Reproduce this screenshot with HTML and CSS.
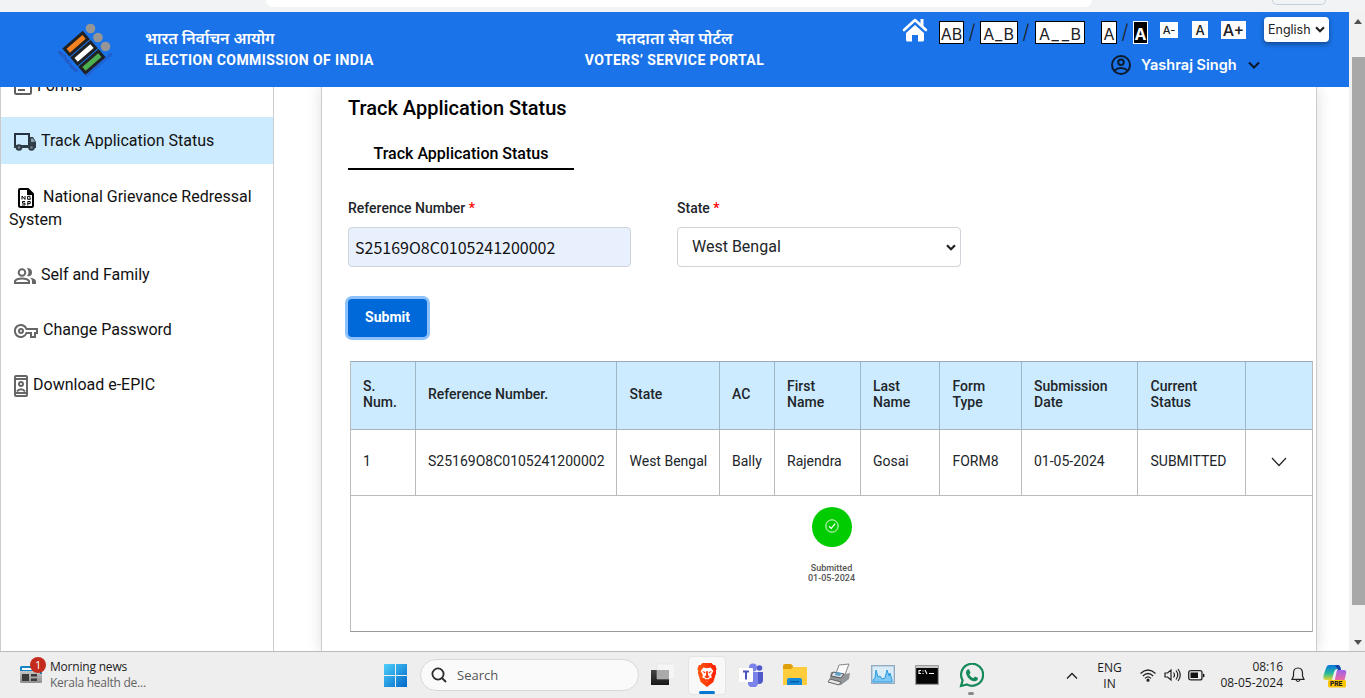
FILE: index.html
```html
<!DOCTYPE html>
<html lang="en">
<head>
<meta charset="utf-8">
<title>Track Application Status</title>
<link rel="stylesheet" href="styles.css">
</head>
<body>
<div class="chrome"><div class="address"></div><div class="pill"></div></div>
<div class="view">
  <div class="page">
    <header class="header">
      <svg class="logo" width="60" height="56" viewBox="0 0 60 56">
        <g transform="rotate(-41 30 28)">
          <g fill="#f58220" stroke="#202124" stroke-width="3"><rect x="14.500" y="11.500" width="24" height="8"/><rect x="14.500" y="23.500" width="24" height="8" fill="#fff"/><rect x="14.500" y="35.500" width="24" height="8" fill="#4caf50"/></g>
        </g>
        <g fill="#969696"><circle cx="33.500" cy="5.500" r="4.800"/><circle cx="41" cy="14.500" r="4.800"/><circle cx="48.500" cy="23.500" r="4.800"/></g>
        <g class="logo-text"><text transform="translate(0 28) rotate(50)" textLength="29">भारत निर्वाचन आयोग</text><text transform="translate(30 54) rotate(-41)" textLength="34" lengthAdjust="spacingAndGlyphs">Election Commission of India</text></g>
      </svg>
      <div class="brand"><div class="hindi h1">भारत निर्वाचन आयोग</div><div class="eng e1">ELECTION COMMISSION OF INDIA</div></div>
      <div class="brand portal"><div class="hindi h2">मतदाता सेवा पोर्टल</div><div class="eng e2">VOTERS’ SERVICE PORTAL</div></div>
      <div class="tools">
        <div class="toolrow">
          <svg class="home" width="26" height="24" viewBox="0 0 26 24"><path d="M2 12 13 2l11 10" fill="none" stroke="#fff" stroke-width="2.600" stroke-linecap="round" stroke-linejoin="round"/><path d="M18.500 1h3v7h-3zM13 7l9 8v7a1.500 1.500 0 0 1-1.500 1.500H16V17h-6v6.500H5.500A1.500 1.500 0 0 1 4 22v-7z" fill="#fff"/></svg>
          <span class="box b1">AB</span><span class="slash">/</span><span class="box b2">A_B</span><span class="slash">/</span><span class="box b3">A<i>_</i><i>_</i>B</span>
          <span class="box b4">A</span><span class="slash s3">/</span><span class="box dark">A</span>
          <span class="size z1">A-</span><span class="size z2">A</span><span class="size z3">A+</span>
          <span class="lang"><span>English</span><svg width="10" height="7" viewBox="0 0 10 7"><path d="m1 1.300 4 4 4-4" fill="none" stroke="#202124" stroke-width="2.200"/></svg></span>
        </div>
        <div class="user">
          <svg width="22" height="22" viewBox="0 0 22 22" fill="none" stroke="#0d1b2e" stroke-width="2"><circle cx="11" cy="11" r="9"/><circle cx="11" cy="8.300" r="2.800"/><path d="M4.500 16.500c3.500-3.300 9.500-3.300 13 0"/></svg>
          <span class="name">Yashraj Singh</span>
          <svg width="12" height="8" viewBox="0 0 12 8"><path d="m1 1.500 5 5 5-5" fill="none" stroke="#0b1626" stroke-width="2"/></svg>
        </div>
      </div>
    </header>
    <div class="body">
      <nav class="sidebar">
        <div class="forms"><svg width="18" height="20" viewBox="0 0 18 20" fill="none" stroke="#5f5f5f" stroke-width="2"><rect x="1" y="1" width="16" height="18" rx="1.500"/><path d="M4 7h10M4 10h10M4 15h7"/></svg><span>Forms</span></div>
        <div class="item active"><svg width="23" height="18" viewBox="0 0 23 18"><path d="M1 1h14v13H1z" fill="none" stroke="#263442" stroke-width="2"/><path d="M15 4h4l3 5v6h-7zM0 12h22v3H0z" fill="#303c46"/><path d="M17 5.500h2l2 3.500h-4z" fill="#8ba3b2"/><g fill="#708390" stroke="#303c46" stroke-width="2"><circle cx="5" cy="14.500" r="2.300"/><circle cx="17.500" cy="14.500" r="2.300"/></g></svg><span>Track Application Status</span></div>
        <div class="item wrap"><svg width="16" height="20" viewBox="0 0 16 20"><path d="M2 1h8l5 5v11.500a1.500 1.500 0 0 1-1.500 1.500h-11A1.500 1.500 0 0 1 1 17.500V2a1 1 0 0 1 1-1z" fill="#fff" stroke="#000" stroke-width="2"/><path d="M9 0v7h6z"/><path d="M4 11.500v-3.500l3 3.500v-3.500M12.500 8.300H9.600v3h2.700v-1.500h-1M7 13.500H4.500v1.700H7V17H4M9.800 17.500v-4h2.400v2.100H9.800" fill="none" stroke="#000" stroke-width="1"/></svg><span>National Grievance Redressal</span><div>System</div></div>
        <div class="item family"><svg width="22" height="17" viewBox="0 0 22 17" fill="none" stroke="#666" stroke-width="2"><circle cx="8" cy="4.500" r="3.300"/><path d="M1 15v-2c2-3.500 12-3.500 14 0v2z"/><path d="M13 0q5 0 5 4.500T13 8q3-3.500 0-8M16 9.500q6 1 6 4V16h-4v-3q0-2-2-3.500" fill="#666" stroke="none"/></svg><span>Self and Family</span></div>
        <div class="item password"><svg width="24" height="15" viewBox="0 0 24 15" fill="none" stroke="#666" stroke-width="2"><path d="M12.500 5H23v4h-2v4h-4V9h-4.500A6 6 0 1 1 12.500 5z"/><circle cx="7" cy="7" r="2"/></svg><span>Change Password</span></div>
        <div class="item epic"><svg width="14" height="22" viewBox="0 0 14 22" fill="none" stroke="#666" stroke-width="2"><rect x="1" y="1" width="12" height="20" rx="1"/><path d="M1 4h12M1 18h12M3 16.500c2-3 6-3 8 0"/><circle cx="7" cy="9" r="2"/></svg><span>Download e-EPIC</span></div>
      </nav>
      <main class="card">
        <h1>Track Application Status</h1>
        <div class="tab">Track Application Status</div>
        <div class="fields">
          <div class="field"><label>Reference Number <b>*</b></label><div class="input ref">S25169O8C0105241200002</div></div>
          <div class="field"><label>State <b>*</b></label><div class="input select"><span>West Bengal</span><svg width="10" height="7" viewBox="0 0 10 7"><path d="m1 1.300 4 4 4-4" fill="none" stroke="#202124" stroke-width="2.200"/></svg></div></div>
        </div>
        <div class="submit">Submit</div>
        <section class="table">
          <div class="row head"><div>S.<br>Num.</div><div>Reference Number.</div><div>State</div><div>AC</div><div>First<br>Name</div><div>Last<br>Name</div><div>Form<br>Type</div><div>Submission<br>Date</div><div>Current<br>Status</div><div></div></div>
          <div class="row data"><div>1</div><div>S25169O8C0105241200002</div><div>West Bengal</div><div>Bally</div><div>Rajendra</div><div>Gosai</div><div>FORM8</div><div>01-05-2024</div><div>SUBMITTED</div><div class="chev"><svg width="16" height="10" viewBox="0 0 16 10"><path d="m1 1 7 7.500L15 1" fill="none" stroke="#212529" stroke-width="1.200"/></svg></div></div>
          <div class="detail">
            <div class="dot"><svg width="14" height="14" viewBox="0 0 14 14" fill="none" stroke="#fff"><circle cx="7" cy="7" r="6.200" stroke-width=".9"/><path d="m4 7.200 2.200 2.200 4-4.800" stroke-width="1.300"/></svg></div>
            <div class="step">Submitted<br>01-05-2024</div>
          </div>
        </section>
      </main>
    </div>
  </div>
  <div class="scroll"><svg width="8" height="5" viewBox="0 0 8 5"><path d="M4 0 8 5H0z" fill="#505050"/></svg><div class="thumb"></div><svg width="8" height="5" viewBox="0 0 8 5"><path d="M0 0h8L4 5z" fill="#505050"/></svg></div>
</div>
<footer class="taskbar">
  <div class="news"><svg width="28" height="28" viewBox="0 0 28 28"><defs><linearGradient id="ng" x2="0" y2="1"><stop stop-color="#ddd"/><stop offset="1" stop-color="#8d8d8d"/></linearGradient></defs><rect x="1" y="9" width="22" height="17" rx="1.500" fill="url(#ng)"/><path d="M1 14v-3.500A1.500 1.500 0 0 1 2.500 9H23v8h-2v-3z" fill="#1586c4"/><path d="M3 11h12v2H3z" fill="#fff"/><path d="M3 17h7v7H3zm9 0h6v2.500h-6zm0 4.500h6V24h-6z" fill="#3b3b3b"/><circle cx="19" cy="8" r="8" fill="#c42b1c"/><text x="16" y="12" class="badge">1</text></svg><div class="newstext"><div>Morning news</div><div class="grey">Kerala health de...</div></div></div>
  <svg class="win" width="23" height="23" viewBox="0 0 23 23"><defs><linearGradient id="wg" x2="1" y2="1"><stop stop-color="#4dd0fb"/><stop offset="1" stop-color="#0067c8"/></linearGradient></defs><path d="M0 0h11v11H0zm12 0h11v11H12zM0 12h11v11H0zm12 0h11v11H12z" fill="url(#wg)"/></svg>
  <div class="search"><svg width="16" height="16" viewBox="0 0 16 16" fill="none" stroke="#2b2b2b" stroke-width="1.800"><circle cx="7" cy="7" r="5.600"/><path d="m11 11 4 4"/></svg><span>Search</span></div>
  <div class="apps">
    <div class="app"><svg width="24" height="24" viewBox="0 0 24 24"><defs><linearGradient id="tv" x2="0" y2="1"><stop stop-color="#444"/><stop offset="1" stop-color="#181818"/></linearGradient></defs><path d="M0 7h18v15H0z" fill="url(#tv)"/><path d="M6 1h18v15H6z" fill="#f5f5f5" stroke="#ddd" stroke-width=".5"/><path d="M6 7h12v9H6z" fill="#aaa"/></svg></div>
    <div class="app current"><svg width="20" height="24" viewBox="0 0 22 24" preserveAspectRatio="none"><defs><linearGradient id="bg" x2="1"><stop stop-color="#ff5a10"/><stop offset="1" stop-color="#ff1c00"/></linearGradient></defs><path d="M6 0h10l2 2h2l1.500 4-.8 2 .3 2-3 9-7 5-7-5-3-9 .3-2L.5 6 2 2h2z" fill="url(#bg)"/><path d="M7 4.500l4 .8 4-.8 3 3.500-2.500 4 .8 2.500-3 1-2.300 3.500-2.300-3.500-3-1 .8-2.500L4 8z" fill="#fff"/><path d="m5.500 8 4 1-1 1.500zm11 0-4 1 1 1.500zM10.200 8h1.600l.5 4.500L14 14l-3 1.500L8 14l1.700-1.500zM8 17l3-1 3 1-3 1.500z" fill="#ff3b0a"/></svg></div>
    <div class="app"><svg width="24" height="24" viewBox="0 0 24 24"><circle cx="20.500" cy="5" r="2.800" fill="#5059c9"/><path d="M17 9h7v8q0 4-4 4h-3z" fill="#5059c9"/><circle cx="14" cy="4.500" r="4" fill="#7b83eb"/><path d="M9 9h10v9a5 5 0 0 1-10 3z" fill="#7b83eb"/><rect y="5" width="14" height="14" rx="1" fill="#fff"/><path d="M4 8.500h6M7 8.500v8" stroke="#4b53bc" stroke-width="2"/></svg></div>
    <div class="app"><svg width="24" height="24" viewBox="0 0 24 24"><path d="M0 3q0-2 2-2h6l2 2v4H0z" fill="#dda00a"/><path d="M0 6h8l2-2h14v18H0z" fill="#ffcd3c"/><path d="M4 22v-5q0-2 2-2h11q2 0 2 2v5z" fill="#1689d8"/><path d="M7 18h9v1.500H7z" fill="#075ea8"/></svg></div>
    <div class="app"><svg width="24" height="24" viewBox="0 0 24 24"><path d="m12 2 10-1-5 13-9-1z" fill="#fafafa" stroke="#888"/><path d="m4 9 14 2 5-1-1 6-8 6-12-3 1-5z" fill="#929699"/><path d="m6 9 11 2-3 4-10-2z" fill="#d6e2ea" stroke="#555"/><path d="m3 16 11 3-2 3-11-3z" fill="#e5e5e5" stroke="#666"/><path d="m9 9 6 1-2 3-5-1z" fill="#5e9fc8"/></svg></div>
    <div class="app"><svg width="24" height="20" viewBox="0 0 24 20"><rect x=".7" y=".7" width="22.600" height="17.600" fill="#d9edf9" stroke="#94abc0" stroke-width="1.400"/><path d="M2 15l2-2 1-8 2 7 2-1 2 3 3-1 2-8 2 6 1-3 2 7v2H2z" fill="#7fc8f5" stroke="#2e9bde"/></svg></div>
    <div class="app"><svg width="24" height="20" viewBox="0 0 24 20"><rect x=".7" y=".7" width="22.600" height="18.600" fill="#050505" stroke="#999"/><path d="M1 1h22v2H1z" fill="#c8c8c8"/><path d="M6 5.500H4v3h2M8 5.500v1M8 8v1M10 5l2 4M14 8.500h5" fill="none" stroke="#fff" stroke-width="1.100"/></svg></div>
    <div class="app whatsapp"><svg width="25" height="25" viewBox="0 0 25 25"><path d="M2 23l1.600-5.700A11 11 0 1 1 8 21.500z" fill="none" stroke="#15895a" stroke-width="2.200"/><path d="M8.500 6.500 10 6.300l1.500 3.500-1.200 1.700q1.500 2.800 4 3.700l1.700-1.700 3 1.500q0 3-3.500 3.300C10.500 18 7 12.500 7 9.500q0-2 1.500-3z" fill="#15895a"/></svg></div>
  </div>
  <div class="tray">
    <svg class="up" width="12" height="8" viewBox="0 0 12 8"><path d="m1 6.500 5-5 5 5" fill="none" stroke="#222" stroke-width="1.400"/></svg>
    <div class="ime">ENG<br>IN</div>
    <svg class="wifi" width="16" height="13" viewBox="0 0 16 13" fill="none" stroke="#222" stroke-width="1.200"><path d="M.5 4.500q7.500-7 15 0M2.800 7q5.200-5 10.400 0M5 9.300q3-3 6 0"/><circle cx="8" cy="11.200" r="1" fill="#222"/></svg>
    <svg class="sound" width="17" height="14" viewBox="0 0 17 14" fill="none" stroke="#222" stroke-width="1.200"><path d="M1 5h2.500L7 2v10L3.500 9H1zM9.500 4.500q2 2.500 0 5M12 2.500q3.500 4.500 0 9M14 1q4.500 6 0 12"/></svg>
    <svg class="battery" width="17" height="11" viewBox="0 0 17 11"><rect x=".7" y=".7" width="13.300" height="9.200" rx="2" fill="none" stroke="#222" stroke-width="1.300"/><path d="M2.500 2.500H10v5.600H2.500zM15 3.500l1.500 1v2l-1.500 1z" fill="#111"/></svg>
    <div class="clock">08:16<br>08-05-2024</div>
    <svg class="bell" width="14" height="16" viewBox="0 0 14 16" fill="none" stroke="#222" stroke-width="1.200"><path d="M7 1C4 1 2.500 3.200 2.500 6v3L1 12.300h12L11.500 9V6C11.500 3.200 10 1 7 1zM5 13q2 3 4 0"/></svg>
    <svg class="copilot" width="24" height="24" viewBox="0 0 24 24"><defs><linearGradient id="cg" x2="0" y2="1"><stop stop-color="#0874df"/><stop offset=".55" stop-color="#26b99c"/><stop offset="1" stop-color="#e4d62f"/></linearGradient><linearGradient id="cp" x2="0" y2="1"><stop stop-color="#9c62ec"/><stop offset="1" stop-color="#ff6b91"/></linearGradient></defs><path d="M6 1h9q2 0 3 4h-4q-2 0-3 3l-2 8H3q-4 0-2-6l2-6q1-3 3-3z" fill="url(#cg)"/><path d="M14 6h7q3 0 2 4l-2 8H10q2 0 2-3z" fill="url(#cp)"/><path d="M12 1h3q2 0 3 5h-3z" fill="#1645aa"/><rect x="5" y="16" width="18" height="7.500" rx="1.500" fill="#ffc400"/><text x="7" y="22.300" class="pre">PRE</text></svg>
  </div>
</footer>
</body>
</html>
```
FILE: styles.css
```css
*{box-sizing:border-box}
body{margin:0;width:1365px;height:698px;overflow:hidden;display:flex;flex-direction:column;background:#fff;font-family:Roboto,"Noto Sans",sans-serif;color:#212529}
svg{display:block;flex:none}
.chrome{height:12px;flex:none;background:#f1f3f5;display:flex;align-items:flex-start}
.address{margin-left:266px;width:826px;height:7px;background:#fff;border-radius:0 0 8px 8px}
.pill{margin-left:180px;width:54px;height:5px;border:1px solid #c4d1dc;border-top:0;border-radius:0 0 9px 9px}
.view{height:639px;flex:none;display:flex}
.page{width:1349px;display:flex;flex-direction:column;overflow:hidden}
.header{height:75px;flex:none;background:#1a73e8;display:flex;color:#fff;white-space:nowrap}
.logo{margin:11px 0 0 57px;overflow:visible}
.logo-text{font:700 4.500px Roboto,sans-serif;fill:#2850bd}
.brand{margin:15px 0 0 28px;width:230px}
.portal{margin-left:160px;width:279px;text-align:center}
.hindi{height:22px;line-height:24px;font-size:16.300px;font-weight:600}
.h1{font-size:15.900px}
.eng{height:22px;line-height:22px;font-size:14px;font-weight:700;letter-spacing:.41px}
.tools{margin-left:88px;width:447px}
.toolrow{height:38px;display:flex;align-items:flex-start;color:#202124;font-family:Inter,sans-serif}
.home{margin-top:6px}
.box{height:23px;margin-top:9px;border:1px solid #000;background:#fff;font-size:16px;line-height:24px;text-align:center}
.box i{font-style:normal;margin:0 1.500px}
.b1{width:25px;margin-left:11px}
.slash{width:16px;margin-top:7px;text-align:center;font-size:20px;line-height:26px;font-weight:300}
.b2{width:38px;letter-spacing:.8px}.b3{width:50px;margin-left:1px}.b4{width:16px;margin-left:16px}
.s3{width:16px}.dark{width:15px;background:#000;color:#fff;border-color:#fff;font-weight:700}
.size{background:#fff;text-align:center;font-weight:500}
.z1{width:18px;height:16px;margin:10px 0 0 12px;font-size:11px;line-height:17px}
.z2{width:16px;height:17px;margin:9px 0 0 14px;font-size:13px;line-height:18px}
.z3{width:25px;height:18px;margin:9px 0 0 13px;font-size:16px;line-height:19px}
.lang{width:65px;height:25px;margin:5px 0 0 18px;padding:0 4px;display:flex;align-items:center;justify-content:space-between;background:#fff;border-radius:4px;box-shadow:0 2px 5px #0006;font-size:12.500px}
.user{display:flex;align-items:center;height:30px;padding-left:208px}
.name{margin:-2px 10px 0 9px;width:97px;font:600 14.500px Inter,sans-serif}
.body{height:564px;display:flex;overflow:hidden}
.sidebar{width:274px;border:solid #ccc;border-width:0 1px;font-size:16px;line-height:23px;color:#111;white-space:nowrap}
.forms{height:30px;padding-left:13px;display:flex;gap:5px}
.forms svg{margin-top:-12px}.forms span{margin-top:-13px}
.item{height:55px;display:flex;gap:5px;padding-left:13px}
.item.active{height:47px;background:#ccebff;padding-top:12px;gap:4px}
.active svg{margin-top:4px}
.item.wrap{height:99px;padding:21px 0 0 8px;flex-wrap:wrap;align-content:flex-start;gap:0}
.wrap svg{margin:3px 9px 0}.wrap div{width:200px}
.family svg{margin-top:5px}
.password svg{margin-top:6px}
.epic svg{margin-top:2px}
.card{margin-left:47px;width:996px;border:solid #ccc;border-width:0 1px;box-shadow:0 0 14px #0002;padding:8px 0 0 26px;white-space:nowrap}
h1{margin:0;height:26px;font-size:20px;font-weight:500;line-height:26px;color:#000}
.tab{width:226px;height:36px;margin-top:13px;padding-top:8px;border-bottom:2px solid #000;font-size:16px;font-weight:500;line-height:24px;text-align:center;color:#000}
.fields{display:flex;gap:46px;margin-top:28px}
.field{width:283px}
.field+.field{width:284px}
label{display:block;height:29px;line-height:20px;font-size:14px;font-weight:500}
label b{color:red;font-weight:500}
.input{height:40px;border:1px solid #ced4da;border-radius:4px;font-size:16px;line-height:38px}
.ref{background:#e8f0fe;color:#111;padding:0 0 0 6px;font-family:"Noto Sans CJK SC",sans-serif}
.select{display:flex;align-items:center;justify-content:space-between;padding:0 4px 0 14px}
.submit{width:79px;height:38px;margin-top:32px;background:#0069d9;border-radius:4px;box-shadow:0 0 0 3px #8dc1fc;color:#fff;font-size:14px;font-weight:700;line-height:37px;text-align:center}
.table{margin:24px 0 0 2px;width:963px;border:1px solid #999;border-color:#9bacb7 #bbb #999;font-size:14px}
.row{display:grid;grid-template-columns:64px 201px 103px 55px 86px 79px 82px 116px 108px 67px}
.row>div{display:flex;align-items:center;padding-left:12px;border-left:1px solid #bbb}
.row>div:first-child{border-left:0}
.row>div:nth-child(3),.row>div:nth-child(7),.row>div:nth-child(9){padding-left:12.500px}
.head{height:68px;background:#ccebff;font-weight:500;line-height:16px;border-bottom:1px solid #a4b5bf}
.head>div{border-left-color:#9fb6c4}
.head>div{padding-bottom:4px;background:#ccebff}
.data{height:66px;border-bottom:1px solid #bbb}
.data>div{padding-bottom:3px}
.data .chev{padding:0 0 2px 25px}
.detail{height:135px;display:flex;flex-direction:column;align-items:center;padding-top:11px}
.dot{width:40px;height:40px;border-radius:50%;background:#0c0;display:flex;align-items:center;justify-content:center;padding-bottom:2px}
.step{margin-top:16px;font-size:9px;line-height:10px;text-align:center;color:#555;font-weight:500}
.scroll{width:16px;background:#f1f1f1;display:flex;flex-direction:column;align-items:center;padding:7px 0 6px 2px}
.thumb{width:13px;height:548px;margin:33px 0 35px 1px;background:#a8a8a8}
.scroll svg:last-child{margin-top:auto}
.taskbar{height:47px;flex:none;border-top:1px solid #b9bcbc;background:#eee;display:flex;font:12px/16px "Open Sans",sans-serif;color:#1b1b1b;white-space:nowrap}
.news{width:383px;padding:5px 0 0 19px;display:flex;gap:3px}
.newstext{padding-top:2px;letter-spacing:-.2px}.grey{color:#626262;letter-spacing:-.25px}
.badge{font:11px "Open Sans",sans-serif;fill:#fff}
.win{margin:12px 13px 0 1px}
.search{width:219px;height:32px;margin-top:7px;background:#fafafa;border:1px solid #d8d8d8;border-radius:16px;display:flex;align-items:center;gap:10px;padding-left:10px;font-size:13px;color:#555}
.apps{display:flex;margin:4px 0 0 5px}
.app{width:38px;height:39px;margin-right:6px;position:relative;display:flex;align-items:center;justify-content:center;padding-bottom:1px}
.app.current{background:#f8f8f8;border:1px solid #e4e4e4;border-radius:4px}
.current:after,.whatsapp:after{content:"";position:absolute;left:10px;bottom:0;width:16px;height:3px;border-radius:2px;background:#0078d4}
.whatsapp:after{left:16px;width:6px;background:#888}
.tray{display:flex;margin-left:auto;width:300px;height:46px}
.up{margin:20px 0 0 1px}
.ime{width:35px;margin:8px 0 0 14px;text-align:center}
.wifi{margin:17px 0 0 13px}.sound{margin:16px 0 0 8px}.battery{margin:18px 0 0 7px}
.clock{width:68px;margin:7px 0 0 10px;text-align:right}
.bell{margin:15px 0 0 8px}.copilot{margin:12px 0 0 18px}
.pre{font:800 6.500px Inter,sans-serif;fill:#222}
```
